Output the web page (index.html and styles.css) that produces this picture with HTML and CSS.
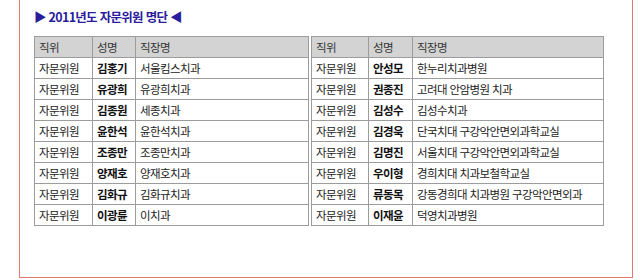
FILE: index.html
```html
<!DOCTYPE html>
<html lang="ko">
<head>
<meta charset="utf-8">
<link rel="stylesheet" href="styles.css">
</head>
<body>
<div class="box">
  <h2 class="title">▶ 2011년도 자문위원 명단 ◀</h2>
  <div class="tables">
    <table class="list left">
      <colgroup><col class="c1"><col class="c2"><col></colgroup>
      <tr class="head"><td>직위</td><td>성명</td><td>직장명</td></tr>
      <tr><td>자문위원</td><td class="name">김홍기</td><td>서울킴스치과</td></tr>
      <tr><td>자문위원</td><td class="name">유광희</td><td>유광희치과</td></tr>
      <tr><td>자문위원</td><td class="name">김종원</td><td>세종치과</td></tr>
      <tr><td>자문위원</td><td class="name">윤한석</td><td>윤한석치과</td></tr>
      <tr><td>자문위원</td><td class="name">조종만</td><td>조종만치과</td></tr>
      <tr><td>자문위원</td><td class="name">양재호</td><td>양재호치과</td></tr>
      <tr><td>자문위원</td><td class="name">김화규</td><td>김화규치과</td></tr>
      <tr><td>자문위원</td><td class="name">이광륜</td><td>이치과</td></tr>
    </table>
    <table class="list right">
      <colgroup><col class="c1r"><col class="c2r"><col></colgroup>
      <tr class="head"><td>직위</td><td>성명</td><td>직장명</td></tr>
      <tr><td>자문위원</td><td class="name">안성모</td><td>한누리치과병원</td></tr>
      <tr><td>자문위원</td><td class="name">권종진</td><td>고려대 안암병원 치과</td></tr>
      <tr><td>자문위원</td><td class="name">김성수</td><td>김성수치과</td></tr>
      <tr><td>자문위원</td><td class="name">김경욱</td><td>단국치대 구강악안면외과학교실</td></tr>
      <tr><td>자문위원</td><td class="name">김명진</td><td>서울치대 구강악안면외과학교실</td></tr>
      <tr><td>자문위원</td><td class="name">우이형</td><td>경희치대 치과보철학교실</td></tr>
      <tr><td>자문위원</td><td class="name">류동목</td><td>강동경희대 치과병원 구강악안면외과</td></tr>
      <tr><td>자문위원</td><td class="name">이재윤</td><td>덕영치과병원</td></tr>
    </table>
  </div>
</div>
</body>
</html>
```
FILE: styles.css
```css
html, body {
  margin: 0;
  padding: 0;
  background: #ffffff;
}
body {
  font-family: "Noto Sans CJK KR", "Noto Sans", sans-serif;
  color: #222;
}
.box {
  margin-left: 19px;
  width: 598px;
  height: 277px;
  border: 1px solid #e0796f;
  border-top: none;
  padding-left: 14px;
  box-sizing: content-box;
}
.title {
  margin: 0;
  padding-top: 8px;
  height: 36px;
  box-sizing: border-box;
  font-size: 12.5px;
  line-height: 18px;
  font-weight: bold;
  color: #2a1c9c;
  letter-spacing: -0.7px;
}
.tables {
  display: flex;
  gap: 2px;
}
.list {
  border-collapse: collapse;
  table-layout: fixed;
  font-size: 11.5px;
  letter-spacing: -0.6px;
}
.list.left { width: 275px; }
.list.right { width: 293px; }
.c1 { width: 58px; }
.c2 { width: 43px; }
.c1r { width: 57px; }
.c2r { width: 44px; }
.list td {
  border: 1px solid #9c9c9c;
  height: 20px;
  padding: 0 0 0 4px;
  line-height: 20px;
  white-space: nowrap;
  overflow: hidden;
}
.head td {
  background: #d3d3d3;
  color: #333;
}
.name {
  font-weight: bold;
  color: #111;
}
```
